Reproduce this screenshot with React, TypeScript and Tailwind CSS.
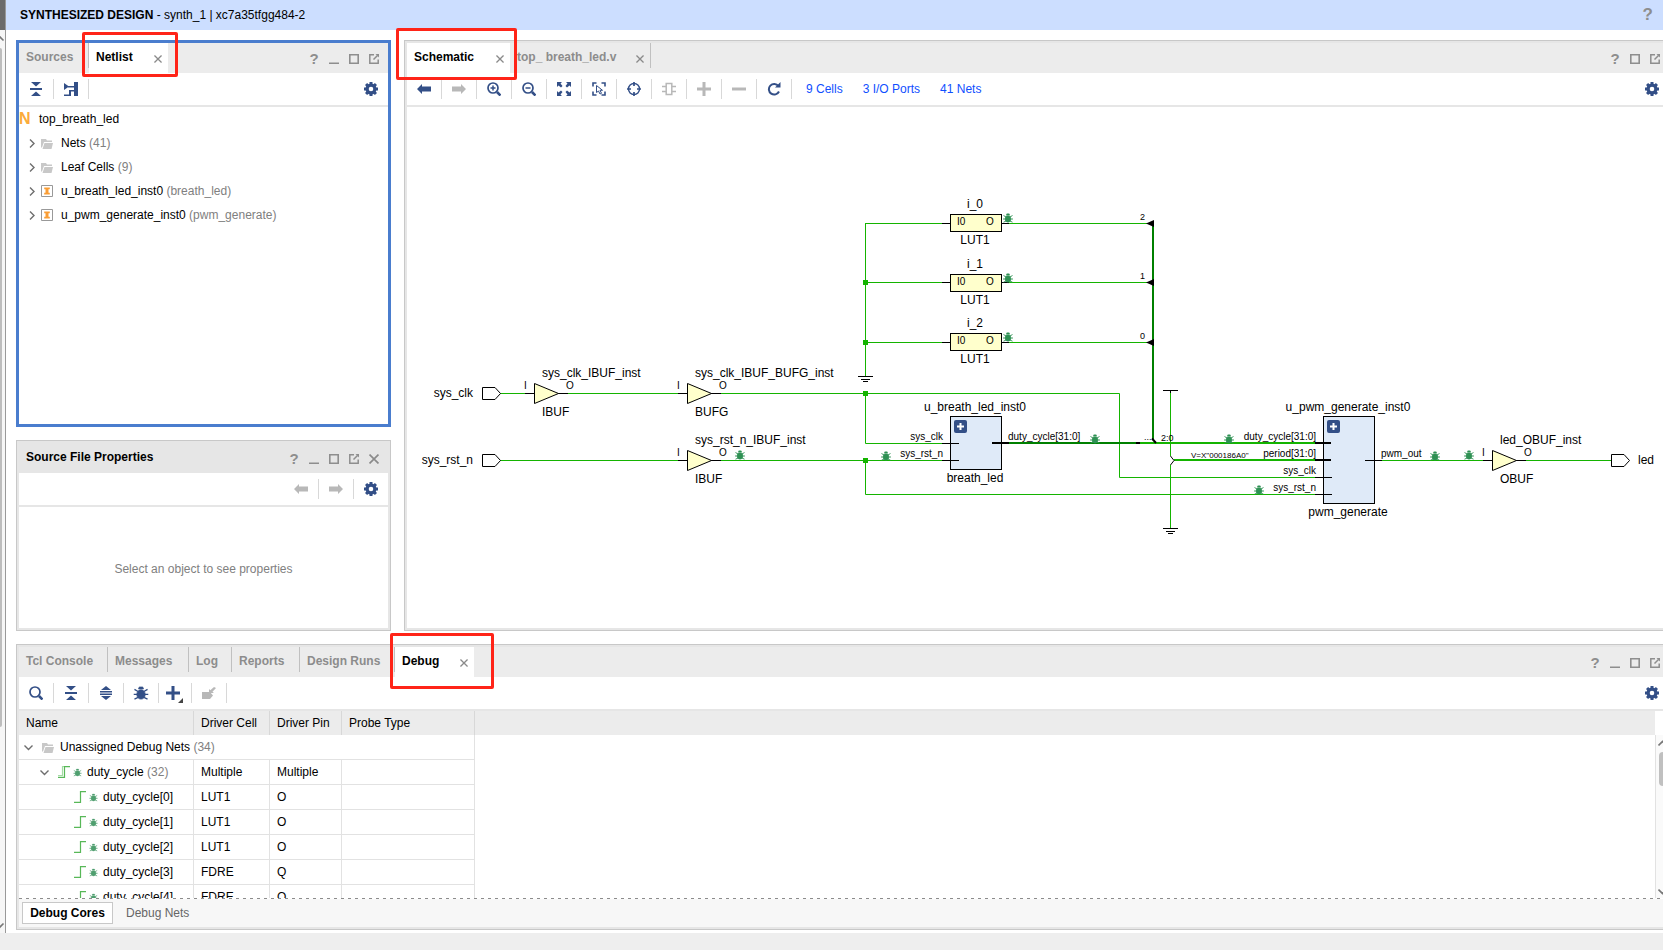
import type { ReactNode } from "react";

const NAVY = "#334f87";
const GREY = "#b8b8b8";

/* ---------- icons ---------- */

const Gear = () => (
  <svg width="14" height="14" viewBox="-7 -7 14 14">
    <circle r="3.9" fill="none" stroke={NAVY} strokeWidth="3.2" />
    {[0, 45, 90, 135, 180, 225, 270, 315].map((a) => (
      <rect key={a} x="-1.5" y="-7" width="3" height="3" fill={NAVY} transform={`rotate(${a})`} />
    ))}
  </svg>
);

const CollapseAll = () => (
  <svg width="14" height="14" fill={NAVY}>
    <path d="M2 0h10L7 4.5zM1 6h12v2H1zM2 14h10L7 9.5z" />
  </svg>
);

const ExpandAll = () => (
  <svg width="14" height="14" fill={NAVY}>
    <path d="M7 0l5 4H2zM1 5h12v1.5H1zM1 7.5h12V9H1zM7 14l5-4H2z" />
  </svg>
);

const Hierarchy = () => (
  <svg width="14" height="14" fill={NAVY}>
    <path d="M0 1l5 3.5L0 8zM4 4h6v1.500H4zM10 0h4v14h-4zM5 8h5v1.500H7V14H0v-1.500h5z" />
  </svg>
);

const Arrow = ({ color, flip }: { color: string; flip?: boolean }) => (
  <svg width="14" height="12" fill={color}>
    <path d={flip ? "M14 6L9 1v2.5H0v5h9V11z" : "M0 6l5-5v2.5h9v5H5V11z"} />
  </svg>
);

const Magnifier = ({ children }: { children?: ReactNode }) => (
  <svg width="14" height="14" fill="none" stroke={NAVY} strokeWidth="1.7">
    <circle cx="6" cy="6" r="5" />
    <path d="M10 10l3.5 3.5" strokeWidth="2.6" />
    {children}
  </svg>
);

const ZoomFit = () => (
  <svg width="14" height="14" fill={NAVY}>
    <path d="M0 0h5L3.5 1.5 5.5 4 4 5.5 1.5 3.5 0 5zM14 0v5l-1.5-1.5L10 5.5 8.5 4l2-2.5L9 0zM0 14V9l1.5 1.5L4 8.5 5.5 10l-2 2.500L5 14zM14 14H9l1.500-1.500-2-2.500L10 8.500l2.500 2L14 9z" />
  </svg>
);

const SelectArea = () => (
  <svg width="14" height="14" fill="none" stroke={NAVY} strokeWidth="1.6">
    <path d="M1 4.5V1h3.5M9.5 1H13v3.5M13 9.5V13H9.5M4.5 13H1V9.5" />
    <path d="M4.500 3.500v7l2-1.500 1.500 3 1.500-.7-1.500-3h2.500z" strokeWidth="1" />
  </svg>
);

const Crosshair = () => (
  <svg width="14" height="14" fill="none" stroke={NAVY}>
    <circle cx="7" cy="7" r="5.500" strokeWidth="1.400" />
    <path d="M7 0v4M7 10v4M0 7h4M10 7h4" strokeWidth="1.700" />
  </svg>
);

const CellPins = () => (
  <svg width="14" height="14" fill="none" stroke={GREY} strokeWidth="1.500">
    <path d="M4.200 1.500h5.600v11H4.200zM0 4.500h4M0 9.500h4M10 4.500h4M10 9.500h4" />
  </svg>
);

const Plus = ({ color }: { color: string }) => (
  <svg width="14" height="14" fill={color}>
    <path d="M5.500 0h3v5.500H14v3H8.500V14h-3V8.500H0v-3h5.500z" />
  </svg>
);

const Minus = () => (
  <svg width="14" height="14" fill={GREY}>
    <path d="M0 5.500h14v3H0z" />
  </svg>
);

const Reload = () => (
  <svg width="14" height="14" fill="none" stroke={NAVY} strokeWidth="2">
    <path d="M12 9.500a5.300 5.300 0 1 1-.6-5.500" />
    <path d="M13.500 0v5.500H8z" fill={NAVY} stroke="none" />
  </svg>
);

// shared by the toolbar, the net rows and the schematic markers
const BugShape = ({ color }: { color: string }) => (
  <g stroke={color} fill={color}>
    <ellipse cx="0" cy="1" rx="2.9" ry="3.2" strokeWidth=".5" />
    <path d="M-1.800-2.800h3.600L1.200-4.200h-2.400z" strokeWidth=".4" />
    <path
      d="M-5 1H5M-2-1l-2.500-1.500M2-1l2.500-1.500M-2 3l-2.500 1.200M2 3l2.500 1.200"
      fill="none"
      strokeWidth=".9"
    />
  </g>
);

const Bug = ({ size, color }: { size: number; color: string }) => (
  <svg width={size} height={size} viewBox="-5.500 -5.500 11 11">
    <BugShape color={color} />
  </svg>
);

const Probe = () => (
  <svg width="14" height="12" fill={GREY}>
    <path d="M0 5h8l3 3.500L8 12H0zM7 6V2l1.300 1.300L12 0l2 1-3.500 3.700L12 6z" />
  </svg>
);

const Folder = () => (
  <svg width="12" height="11" fill="#c8c8c8">
    <path d="M0 1h5l1 1.500h5V4H3L1 9.500H0zM3.500 5H12l-1.500 6H1.500z" />
  </svg>
);

const Instance = () => (
  <svg width="12" height="12">
    <path d="M.5.5h11v11H.5z" fill="#fff" stroke="#999" />
    <path d="M3.200 2.500h5.600v1.700H7.500v3.600h1.300v1.700H3.200V7.800h1.300V4.200H3.200z" fill="#fa9d34" />
  </svg>
);

const Chevron = ({ open }: { open?: boolean }) => (
  <svg width="9" height="9" fill="none" stroke="#6e6e6e" strokeWidth="1.400">
    <path d={open ? "M.5 2.500l4 4 4-4" : "M2 .5l4 4-4 4"} />
  </svg>
);

const Wave = ({ bus }: { bus?: boolean }) => (
  <svg width="12" height="12" fill="none" strokeWidth="1.200">
    {bus && <path d="M0 9.500h4.500V.5H9" stroke="#a4dba4" />}
    <path d="M0 11.400h6.500V.6H12" stroke="#58b858" />
  </svg>
);

const CloseX = ({ size = 8 }: { size?: number }) => (
  <svg width={size} height={size} viewBox="0 0 9 9" fill="none" stroke="#8a8a8a" strokeWidth="1.500">
    <path d="M.5.5l8 8M8.500.5l-8 8" />
  </svg>
);

/* ---------- window chrome ---------- */

type Control = "help" | "min" | "max" | "float" | "close";

const controlIcons: Record<Control, ReactNode> = {
  help: <span className="text-[15px] leading-[14px] font-bold text-[#8e8e8e]">?</span>,
  min: (
    <svg width="10" height="10" fill="#8e8e8e">
      <path d="M0 8.500h10V10H0z" />
    </svg>
  ),
  max: (
    <svg width="10" height="10" fill="none" stroke="#8e8e8e" strokeWidth="1.600">
      <path d="M.8.8h8.400v8.400H.8z" />
    </svg>
  ),
  float: (
    <svg width="10" height="10" fill="none" stroke="#8e8e8e" strokeWidth="1.500">
      <path d="M5 .8H.8v8.400h8.400V5.500M4.500 5.500l4-4" />
      <path d="M6.500 0H10v3.500z" fill="#8e8e8e" stroke="none" />
    </svg>
  ),
  close: <CloseX size={10} />,
};

const Controls = ({ items }: { items: Control[] }) => (
  <div className="ml-auto flex pr-1 pt-1.5">
    {items.map((c) => (
      <button key={c} aria-label={c} className="flex h-5 w-5 items-center justify-center">
        {controlIcons[c]}
      </button>
    ))}
  </div>
);

interface TabProps {
  label: string;
  width: string;
  active?: boolean;
  closable?: boolean;
  divider?: boolean;
}

const Tab = ({ label, width, active, closable, divider = true }: TabProps) => (
  <div className={`flex h-[30px] ${width} ${active ? "bg-white" : ""}`}>
    <button
      className={`h-7 whitespace-nowrap pl-[7px] text-[12px] leading-7 font-bold ${active ? "text-black" : "text-[#8c8c8c]"}`}
    >
      {label}
    </button>
    {closable && (
      <button aria-label={`Close ${label}`} className="mr-1.5 ml-auto pt-0.5">
        <CloseX />
      </button>
    )}
    {divider && <span className={`h-[25px] w-px bg-[#c0c0c0] ${closable ? "" : "ml-auto"}`} />}
  </div>
);

const Tool = ({ label, width = "w-[35px]", children }: { label: string; width?: string; children: ReactNode }) => (
  <button
    aria-label={label}
    className={`flex h-5 shrink-0 items-center justify-center border-r border-[#d8d8d8] ${width}`}
  >
    {children}
  </button>
);

const Toolbar = ({ children }: { children?: ReactNode }) => (
  <div className="flex h-[34px] shrink-0 items-center border-b-2 border-[#e6e6e6] bg-white">
    {children}
    <button aria-label="Settings" className="ml-auto flex h-5 w-[34px] items-center justify-center">
      <Gear />
    </button>
  </div>
);

const Panel = ({ className = "", children }: { className?: string; children: ReactNode }) => (
  <section className={`flex flex-col overflow-hidden border border-[#c8c8c8] bg-[#e6e6e6] p-0.5 ${className}`}>
    {children}
  </section>
);

/* ---------- netlist ---------- */

const tree = [
  { name: "Nets", note: "(41)", icon: <Folder /> },
  { name: "Leaf Cells", note: "(9)", icon: <Folder /> },
  { name: "u_breath_led_inst0", note: "(breath_led)", icon: <Instance /> },
  { name: "u_pwm_generate_inst0", note: "(pwm_generate)", icon: <Instance /> },
];

const NetlistPanel = () => (
  <section className="flex flex-1 flex-col overflow-hidden border-[3px] border-[#4a7dce] bg-white">
    <div className="flex h-[30px] shrink-0 bg-[#ececec]">
      <Tab label="Sources" width="w-[70px]" />
      <Tab label="Netlist" width="w-[79px]" active closable divider={false} />
      <Controls items={["help", "min", "max", "float"]} />
    </div>
    <Toolbar>
      <Tool label="Collapse all">
        <CollapseAll />
      </Tool>
      <Tool label="Show hierarchy">
        <Hierarchy />
      </Tool>
    </Toolbar>
    <ul>
      <li className="flex h-6 items-center">
        <span className="w-5 text-[16px] font-bold text-[#fbab3a]">N</span>
        top_breath_led
      </li>
      {tree.map((n) => (
        <li key={n.name} className="flex h-6 items-center pl-[9px]">
          <Chevron />
          <span className="ml-1 w-5">{n.icon}</span>
          <span>
            {n.name} <span className="text-[#808080]">{n.note}</span>
          </span>
        </li>
      ))}
    </ul>
  </section>
);

const PropertiesPanel = () => (
  <Panel className="h-[191px] shrink-0">
    <div className="flex h-[30px] shrink-0">
      <h2 className="pl-[7px] text-[12px] leading-7 font-bold">Source File Properties</h2>
      <Controls items={["help", "min", "max", "float", "close"]} />
    </div>
    <div className="flex h-[34px] shrink-0 items-center justify-end border-b-2 border-[#e6e6e6] bg-white">
      <Tool label="Previous object">
        <Arrow color={GREY} />
      </Tool>
      <Tool label="Next object">
        <Arrow color={GREY} flip />
      </Tool>
      <button aria-label="Settings" className="flex h-5 w-[34px] items-center justify-center">
        <Gear />
      </button>
    </div>
    <div className="flex flex-1 items-center justify-center bg-white pt-0.5 text-[#808080]">
      Select an object to see properties
    </div>
  </Panel>
);

/* ---------- schematic ---------- */

const WIRE = "#14b400";
const BUS = "#008000";

const Wire = ({ d, color = WIRE, w = 1 }: { d: string; color?: string; w?: number }) => (
  <path d={d} fill="none" stroke={color} strokeWidth={w} />
);

const Buffer = ({ x, y, name, type }: { x: number; y: number; name: string; type: string }) => (
  <g>
    <path d={`M${x - 9} ${y}h9M${x + 24} ${y}h10`} stroke="#000" />
    <path d={`M${x + 0.5} ${y - 10}v20l24-10z`} fill="#ffffcc" stroke="#000" />
    <text x={x + 8} y={y - 16.5}>{name}</text>
    <text x={x - 10} y={y - 4.5} fontSize="10">I</text>
    <text x={x + 32} y={y - 4.5} fontSize="10">O</text>
    <text x={x + 8} y={y + 22.5}>{type}</text>
  </g>
);

const Port = ({ x, y }: { x: number; y: number }) => (
  <path d={`M${x + 0.5} ${y - 6}h12.500l5.500 6-5.500 6h-12.500z`} fill="#fff" stroke="#000" />
);

const Lut = ({ top, wire, name, bit }: { top: number; wire: number; name: string; bit: string }) => (
  <g>
    <Wire d={`M865 ${wire}H942M1009 ${wire}H1147`} />
    <path d={`M942 ${wire}h9M1001 ${wire}h8`} stroke="#000" />
    <rect x="950.5" y={top} width="51" height="17" fill="#ffffcc" stroke="#000" />
    <path d={`M1146 ${wire}l8-3.500v7z`} />
    <text x="957" y={top + 10.5} fontSize="10">I0</text>
    <text x="986" y={top + 10.5} fontSize="10">O</text>
    <text x="975" y={top - 6.5} textAnchor="middle">{name}</text>
    <text x="975" y={top + 29.5} textAnchor="middle">LUT1</text>
    <text x="1140" y={wire - 3.5} fontSize="9">{bit}</text>
  </g>
);

const Ground = ({ x, y }: { x: number; y: number }) => (
  <path d={`M${x - 7.5} ${y}h15M${x - 4.5} ${y + 3}h9M${x - 2.5} ${y + 5}h5`} stroke="#000" />
);

const Block = ({ x, h, name, type }: { x: number; h: number; name: string; type: string }) => (
  <g>
    <rect x={x} y="416.5" width="51" height={h} fill="#dfeaf8" stroke="#000" />
    <rect x={x + 3.5} y="420" width="13" height="13" rx="2" fill={NAVY} />
    <path d={`M${x + 6.5} 426.500h7M${x + 10} 423v7`} stroke="#fff" strokeWidth="2" />
    <text x={x + 24.5} y="411" textAnchor="middle">{name}</text>
    <text x={x + 24.5} y={429 + h} textAnchor="middle">{type}</text>
  </g>
);

const bugs = [
  [1008, 218], [1008, 278], [1008, 337], [740, 455], [886, 456], [1095, 439],
  [1229, 439], [1259, 490], [1435, 456], [1469, 455],
];

const Schematic = () => (
  <svg
    width="1256"
    height="521"
    viewBox="407 107 1256 521"
    fontFamily="Liberation Sans, Arial, sans-serif"
    fontSize="12"
    className="shrink-0"
  >
    <Wire d="M500 393.500H526M568 393.500H678M721 393.500H1119.500V477.500H1315" />
    <Wire d="M500 460.500H678M721 460.500H942" />
    <Wire d="M865.500 223V376M865.500 393.500V443.500H942M865.500 460.500V494.500H1315" />
    <Wire d="M1170.500 391V456M1170.500 465V528" />
    <Wire d="M1382 460.500H1485M1526 460.500H1611" />
    <Wire d="M1153 224V439M1009 443H1136" color={BUS} w={2} />
    <Wire d="M1140 443H1315M1174 460H1315" w={2} />

    <text x="473" y="397" textAnchor="end">sys_clk</text>
    <text x="473" y="464" textAnchor="end">sys_rst_n</text>
    <Port x={482} y={393.5} />
    <Port x={482} y={460.5} />
    <Buffer x={534} y={393.5} name="sys_clk_IBUF_inst" type="IBUF" />
    <Buffer x={687} y={393.5} name="sys_clk_IBUF_BUFG_inst" type="BUFG" />
    <Buffer x={687} y={460.5} name="sys_rst_n_IBUF_inst" type="IBUF" />

    <Lut top={214.5} wire={223.5} name="i_0" bit="2" />
    <Lut top={274.5} wire={282.5} name="i_1" bit="1" />
    <Lut top={333.5} wire={342.5} name="i_2" bit="0" />
    <Ground x={865.5} y={376.5} />
    {[282, 342, 393, 460].map((y) => (
      <rect key={y} x="863" y={y - 2} width="5" height="5" fill={WIRE} />
    ))}

    <Block x={950.5} h={53} name="u_breath_led_inst0" type="breath_led" />
    <path d="M942 443.500h17M942 460.500h17" stroke="#000" />
    <path d="M992 443h17M1136 443h4M1152 438.500l4 4.500" stroke="#000" strokeWidth="2" />
    <g fontSize="10">
      <text x="943" y="440" textAnchor="end">sys_clk</text>
      <text x="943" y="457" textAnchor="end">sys_rst_n</text>
      <text x="1008" y="440">duty_cycle[31:0]</text>
      <text x="1316" y="440" textAnchor="end">duty_cycle[31:0]</text>
      <text x="1316" y="457" textAnchor="end">period[31:0]</text>
      <text x="1316" y="474" textAnchor="end">sys_clk</text>
      <text x="1316" y="491" textAnchor="end">sys_rst_n</text>
      <text x="1381" y="457">pwm_out</text>
    </g>
    <text x="1144" y="440" fontSize="9">...</text>
    <text x="1161" y="441" fontSize="9">2:0</text>
    <text x="1191" y="458" fontSize="8">V=X"000186A0"</text>
    <path d="M1163 390.500h15M1170.500 390v3M1170.500 456l3.500 4.500-3.500 4.500" fill="none" stroke="#000" />
    <Ground x={1170.5} y={528.5} />

    <Block x={1323.5} h={87} name="u_pwm_generate_inst0" type="pwm_generate" />
    <path d="M1315 443h16M1315 460h16" stroke="#000" strokeWidth="2" />
    <path d="M1315 477.500h17M1315 494.500h17M1365 460.500h17" stroke="#000" />

    <Buffer x={1492} y={460.5} name="led_OBUF_inst" type="OBUF" />
    <Port x={1611} y={460.5} />
    <text x="1638" y="464">led</text>

    {bugs.map(([x, y]) => (
      <g key={`${x}-${y}`} transform={`translate(${x} ${y})`}>
        <BugShape color="#2f9154" />
      </g>
    ))}
  </svg>
);

const SchematicPanel = () => (
  <Panel className="min-w-0 flex-1">
    <div className="flex h-[30px] shrink-0 bg-[#ececec]">
      <Tab label="Schematic" width="w-[103px]" active closable divider={false} />
      <Tab label="top_ breath_led.v" width="w-[141px]" closable />
      <Controls items={["help", "max", "float"]} />
    </div>
    <Toolbar>
      <Tool label="Back"><Arrow color={NAVY} /></Tool>
      <Tool label="Forward"><Arrow color={GREY} flip /></Tool>
      <Tool label="Zoom in">
        <Magnifier>
          <path d="M3.500 6h5M6 3.500v5" strokeWidth="1.500" />
        </Magnifier>
      </Tool>
      <Tool label="Zoom out">
        <Magnifier>
          <path d="M3.500 6h5" strokeWidth="1.500" />
        </Magnifier>
      </Tool>
      <Tool label="Zoom fit"><ZoomFit /></Tool>
      <Tool label="Select area"><SelectArea /></Tool>
      <Tool label="Autofit selection"><Crosshair /></Tool>
      <Tool label="Toggle pins"><CellPins /></Tool>
      <Tool label="Add"><Plus color={GREY} /></Tool>
      <Tool label="Remove"><Minus /></Tool>
      <Tool label="Regenerate"><Reload /></Tool>
      <nav className="flex gap-5 pl-3.5 whitespace-nowrap text-[#0f4fff]">
        <a href="#cells">9 Cells</a>
        <a href="#ports">3 I/O Ports</a>
        <a href="#nets">41 Nets</a>
      </nav>
    </Toolbar>
    <div className="flex-1 overflow-hidden bg-white">
      <Schematic />
    </div>
  </Panel>
);

/* ---------- debug ---------- */

const nets = [
  { name: "duty_cycle[0]", cell: "LUT1", pin: "O" },
  { name: "duty_cycle[1]", cell: "LUT1", pin: "O" },
  { name: "duty_cycle[2]", cell: "LUT1", pin: "O" },
  { name: "duty_cycle[3]", cell: "FDRE", pin: "Q" },
  { name: "duty_cycle[4]", cell: "FDRE", pin: "Q" },
];

const cell = "h-[25px] border-r border-b border-[#e2e2e2] p-0 pl-[7px]";
const head = "h-6 border-r border-[#d8d8d8] p-0 pl-[7px] text-left font-normal";

const DebugTable = () => (
  <table className="w-full table-fixed border-separate border-spacing-0 whitespace-nowrap">
    <colgroup>
      <col className="w-[175px]" />
      <col className="w-[76px]" />
      <col className="w-[72px]" />
      <col className="w-[133px]" />
      <col />
    </colgroup>
    <thead className="bg-[#ececec]">
      <tr>
        <th className={head}>Name</th>
        <th className={head}>Driver Cell</th>
        <th className={head}>Driver Pin</th>
        <th className={head}>Probe Type</th>
        <th />
      </tr>
    </thead>
    <tbody>
      <tr>
        <td colSpan={4} className="h-[25px] border-r border-b border-[#e2e2e2] p-0">
          <div className="flex items-center pl-[5px]">
            <Chevron open />
            <span className="ml-[9px] w-[18px]"><Folder /></span>
            <span>Unassigned Debug Nets <span className="text-[#808080]">(34)</span></span>
          </div>
        </td>
      </tr>
      <tr>
        <td className="h-[25px] border-r border-b border-[#e2e2e2] p-0">
          <div className="flex items-center pl-[21px]">
            <Chevron open />
            <span className="mr-[3px] ml-[9px]"><Wave bus /></span>
            <Bug size={9} color="#4f9f6f" />
            <span className="ml-[5px]">duty_cycle <span className="text-[#808080]">(32)</span></span>
          </div>
        </td>
        <td className={cell}>Multiple</td>
        <td className={cell}>Multiple</td>
        <td className={cell} />
      </tr>
      {nets.map((n) => (
        <tr key={n.name}>
          <td className="h-[25px] border-r border-b border-[#e2e2e2] p-0">
            <div className="flex items-center pl-[55px]">
              <span className="mr-[3px]"><Wave /></span>
              <Bug size={9} color="#4f9f6f" />
              <span className="ml-[5px]">{n.name}</span>
            </div>
          </td>
          <td className={cell}>{n.cell}</td>
          <td className={cell}>{n.pin}</td>
          <td className={cell} />
        </tr>
      ))}
    </tbody>
  </table>
);

const DebugPanel = () => (
  <Panel className="h-[286px] shrink-0">
    <div className="flex h-[30px] shrink-0 bg-[#ececec]">
      <Tab label="Tcl Console" width="w-[89px]" />
      <Tab label="Messages" width="w-[81px]" />
      <Tab label="Log" width="w-[43px]" />
      <Tab label="Reports" width="w-[68px]" />
      <Tab label="Design Runs" width="w-[95px]" />
      <Tab label="Debug" width="w-[79px]" active closable divider={false} />
      <Controls items={["help", "min", "max", "float"]} />
    </div>
    <Toolbar>
      <Tool label="Search"><Magnifier /></Tool>
      <Tool label="Collapse all"><CollapseAll /></Tool>
      <Tool label="Expand all"><ExpandAll /></Tool>
      <Tool label="Set up debug"><Bug size={16} color={NAVY} /></Tool>
      <Tool label="Create debug core" width="w-[33px]">
        <svg width="18" height="20" viewBox="0 -3 18 20">
          <path d="M5.500 0h3v5.500H14v3H8.500V14h-3V8.500H0v-3h5.500z" fill={NAVY} />
          <path d="M17 12v5h-5z" fill="#444" />
        </svg>
      </Tool>
      <Tool label="Add probe"><Probe /></Tool>
    </Toolbar>
    <div className="flex min-h-0 flex-1 overflow-hidden bg-white">
      <div className="min-w-0 flex-1 overflow-hidden">
        <DebugTable />
      </div>
      <div className="mt-6 flex w-3.5 flex-col items-center border-l border-[#e2e2e2] bg-[#fafafa]">
        <svg width="9" height="16" fill="none" stroke="#777" strokeWidth="1.600">
          <path d="M.5 10.500l4-4 4 4" />
        </svg>
        <div className="mt-px h-[34px] w-2 rounded bg-[#c0c0c0]" />
        <svg width="9" height="12" className="mt-auto" fill="none" stroke="#777" strokeWidth="1.600">
          <path d="M.5 3.500l4 4 4-4" />
        </svg>
      </div>
    </div>
    <div className="h-px shrink-0 bg-white bg-[repeating-linear-gradient(90deg,#8c8c8c_0_3px,transparent_3px_7px)]" />
    <div className="flex h-7 shrink-0 items-center bg-[#f7f7f7] pl-[3px]">
      <button className="h-[22px] w-[91px] border border-[#c8c8c8] bg-white font-bold">Debug Cores</button>
      <button className="ml-[13px] text-[#666]">Debug Nets</button>
    </div>
  </Panel>
);

/* ---------- page ---------- */

const App = () => (
  <div className="relative flex h-screen min-h-[760px] flex-col overflow-hidden bg-[#eeeeee] font-['Liberation_Sans',Arial,sans-serif] text-[12px] leading-4 text-black">
    <div className="flex min-h-0 flex-1">
      {/* edge of the flow navigator */}
      <aside className="flex w-1.5 shrink-0 flex-col overflow-hidden border-r border-[#999] bg-[#f6f6f6]">
        <div className="h-[30px] bg-[#6b6b6b]" />
        <svg width="5" height="18" fill="none" stroke="#777" strokeWidth="1.600">
          <path d="M-1 6l4.500 4.500" />
        </svg>
        <div className="h-[679px] w-0.5 rounded-r bg-[#bdbdbd]" />
        <svg width="5" height="14" className="mt-auto" fill="none" stroke="#777" strokeWidth="1.600">
          <path d="M-1 9l4.500-4.500" />
        </svg>
      </aside>
      <div className="flex min-w-0 flex-1 flex-col bg-white">
        <header className="flex h-[30px] shrink-0 items-center bg-[#ccdeff] pr-2.5 pl-3.5">
          <h1>
            <b>SYNTHESIZED DESIGN</b> - synth_1 | xc7a35tfgg484-2
          </h1>
          <button aria-label="Help" className="ml-auto text-[17px] font-bold text-[#8e8e8e]">
            ?
          </button>
        </header>
        {/* the right panels run on past the window edge */}
        <main className="-mr-[9px] flex min-h-0 flex-1 flex-col gap-[13px] pt-2.5 pb-[3px] pl-2.5">
          <div className="flex min-h-0 flex-1 gap-[13px]">
            <div className="flex w-[375px] shrink-0 flex-col gap-[13px]">
              <NetlistPanel />
              <PropertiesPanel />
            </div>
            <SchematicPanel />
          </div>
          <DebugPanel />
        </main>
      </div>
    </div>
    <footer className="h-[17px] shrink-0" />

    {/* callouts round the tabs */}
    <div className="pointer-events-none absolute top-8 left-[82px] h-[45px] w-24 rounded-xs border-[3px] border-[#ff2418]" />
    <div className="pointer-events-none absolute top-7 left-[396px] h-[52px] w-[121px] rounded-xs border-[3px] border-[#ff2418]" />
    <div className="pointer-events-none absolute bottom-[261px] left-[390px] h-14 w-[104px] rounded-xs border-[3px] border-[#ff2418]" />
  </div>
);

export default App;
